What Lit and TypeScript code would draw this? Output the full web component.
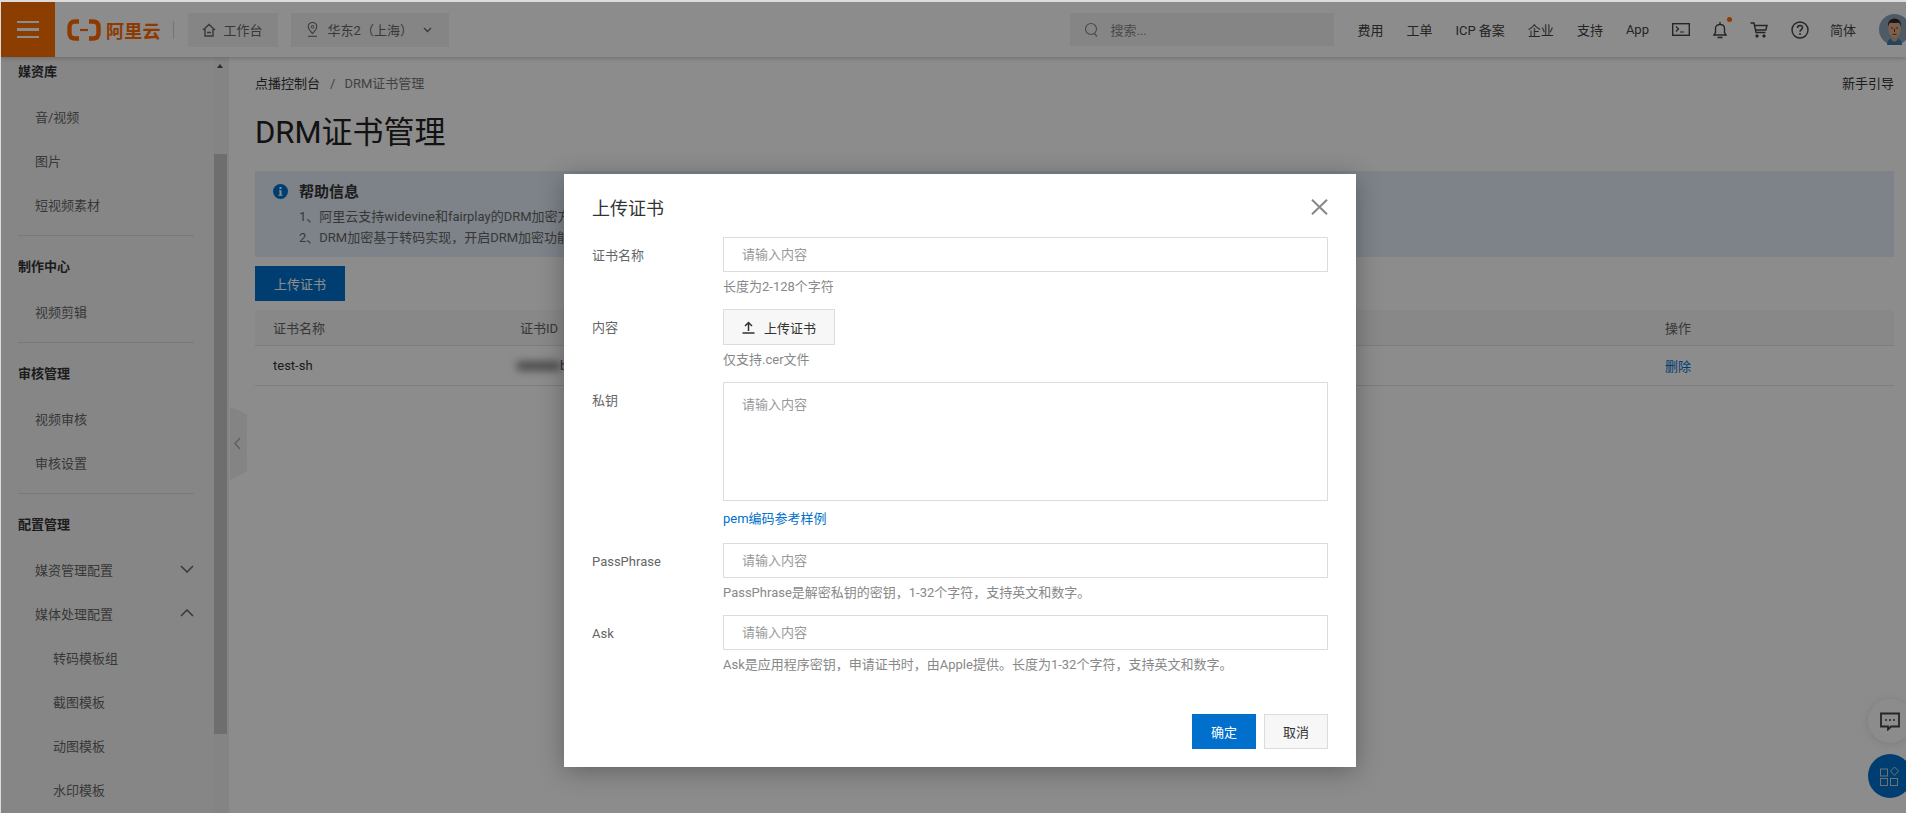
import { LitElement, html, css, svg } from 'lit';
import { customElement } from 'lit/decorators.js';

const menu = [
  { title: '媒资库', items: [{ name: '音/视频' }, { name: '图片' }, { name: '短视频素材' }] },
  { title: '制作中心', items: [{ name: '视频剪辑' }] },
  { title: '审核管理', items: [{ name: '视频审核' }, { name: '审核设置' }] },
  {
    title: '配置管理',
    items: [
      { name: '媒资管理配置', arrow: 'down' },
      { name: '媒体处理配置', arrow: 'up' },
      { name: '转码模板组', sub: true },
      { name: '截图模板', sub: true },
      { name: '动图模板', sub: true },
      { name: '水印模板', sub: true },
    ],
  },
];

const icon = (w: number, h: number, box: string, body: unknown) =>
  html`<svg width=${w} height=${h} viewBox=${box} fill="none" stroke="currentColor">${body}</svg>`;

const chevron = (up: boolean) => icon(14, 8, '0 0 14 8', svg`<path d=${up ? 'M1 7l6-6 6 6' : 'M1 1l6 6 6-6'} stroke-width="1.5"/>`);

@customElement('app-root')
export class AppRoot extends LitElement {
  static styles = css`
    :host {
      display: block;
      font-family: Roboto, "Noto Sans CJK SC", sans-serif;
      font-size: 13px;
      color: #333;
    }
    .page {
      position: relative;
      width: 1906px;
      height: 813px;
      box-sizing: border-box;
      overflow: hidden;
      background: #fff;
      border-top: 2px solid #dcdcdc;
      border-left: 1px solid #dcdcdc;
    }

    /* top bar */
    .top {
      position: relative;
      z-index: 1;
      display: flex;
      align-items: center;
      height: 55px;
      background: #fff;
      box-shadow: 0 1px 5px rgba(0, 0, 0, 0.22);
    }
    .burger {
      display: flex;
      flex-direction: column;
      justify-content: center;
      gap: 5px;
      box-sizing: border-box;
      width: 54px;
      height: 55px;
      padding: 0 16px;
      background: #ff7200;
    }
    .burger i { display: block; height: 2.4px; background: #fff; }
    .logo { display: flex; align-items: center; margin-left: 12px; color: #ff6a00; }
    .logo b { margin-left: 5px; font-size: 18px; font-weight: 700; letter-spacing: 0.2px; white-space: nowrap; }
    .sep { width: 1px; height: 18px; margin: 0 14px 0 12px; background: #d5d5d5; }
    .tab {
      display: flex;
      align-items: center;
      box-sizing: border-box;
      height: 34px;
      background: #f3f3f3;
      color: #666;
      white-space: nowrap;
    }
    .tab.work { width: 90px; padding-left: 14px; gap: 8px; margin-right: 13px; }
    .tab.region { width: 158px; padding-left: 16px; gap: 10px; }
    .search {
      display: flex;
      align-items: center;
      gap: 11px;
      box-sizing: border-box;
      width: 264px;
      height: 33px;
      margin-left: auto;
      padding-left: 14px;
      background: #f3f3f3;
      color: #888;
    }
    .nav { display: flex; align-items: center; gap: 23px; margin-left: 23px; color: #444; white-space: nowrap; }
    .lang { margin-left: -2px; }
    .bell { position: relative; display: flex; }
    .bell::after {
      content: "";
      position: absolute;
      right: -5px;
      top: -4px;
      width: 5px;
      height: 5px;
      border-radius: 50%;
      background: #ff6a00;
    }
    .avatar { display: flex; margin: 0 -4px 0 23px; }

    .body { display: flex; height: 756px; }

    /* sidebar */
    .side {
      display: flex;
      flex: none;
      width: 228px;
      height: 756px;
      overflow: hidden;
      background: #f5f5f5;
    }
    .list { flex: 1; margin-top: -7px; padding: 0 20px 0 17px; color: #666; }
    .head { height: 44px; line-height: 44px; font-weight: 700; color: #333; }
    .item {
      display: flex;
      align-items: center;
      justify-content: space-between;
      height: 44px;
      padding-left: 17px;
    }
    .item.sub { padding-left: 35px; }
    .list hr { margin: 9px 0 9px; border: 0; border-top: 1px solid #dcdcdc; }
    .bar { flex: none; width: 15px; background: #f1f1f1; }
    .bar .up {
      width: 0;
      margin: 7px 0 0 3px;
      border: 3.5px solid transparent;
      border-top: 0;
      border-bottom: 4px solid #505050;
    }
    .bar .thumb { width: 13px; height: 580px; margin-top: 86px; background: #c8c8c8; }

    .handle {
      position: absolute;
      z-index: 1;
      left: 229px;
      top: 405px;
      width: 17px;
      height: 73px;
      display: flex;
      align-items: center;
      padding-left: 4px;
      box-sizing: border-box;
      background: #f0f0f0;
      color: #aaa;
      clip-path: polygon(0 0, 100% 10%, 100% 88%, 0 100%);
    }

    /* main */
    .main { flex: 1; min-width: 0; padding: 17px 12px 0 26px; }
    .crumb { display: flex; justify-content: space-between; line-height: 20px; color: #333; }
    .crumb span span { color: #777; }
    .crumb em { margin: 0 9px 0 10px; font-style: normal; color: #777; }
    h1 { margin: 19px 0 18px; font-size: 31px; font-weight: 400; line-height: 40px; color: #222; }
    .alert {
      display: flex;
      gap: 11px;
      box-sizing: border-box;
      height: 86px;
      padding: 11px 18px;
      background: #e3effa;
      line-height: 21px;
      color: #666;
      white-space: nowrap;
      overflow: hidden;
    }
    .alert svg { flex: none; margin-top: 2px; }
    .alert strong { display: block; margin-bottom: 3px; font-size: 15px; color: #333; }
    .primary {
      display: block;
      width: 90px;
      height: 35px;
      margin: 9px 0;
      padding: 0;
      border: 0;
      background: #0070cc;
      color: #fff;
      font: inherit;
    }
    .grid { display: grid; grid-template-columns: 247px 1fr 247px; align-items: center; border-bottom: 1px solid #e3e3e3; }
    .grid > div { padding-left: 18px; }
    .grid.th { height: 36px; background: #f7f7f7; color: #666; box-sizing: border-box; }
    .grid.tr { height: 40px; box-sizing: border-box; color: #333; }
    .secret { display: flex; align-items: center; margin-left: -3px; }
    .secret i { width: 43px; height: 8px; background: #777; filter: blur(4px); }
    .secret span { color: #60307a; }
    .del { color: #0070cc; }

    .chat, .apps {
      position: absolute;
      left: 1867px;
      display: flex;
      align-items: center;
      justify-content: center;
      box-sizing: border-box;
      width: 44px;
      height: 44px;
      border-radius: 50%;
    }
    .chat { top: 697px; background: #fff; color: #444; box-shadow: 0 1px 8px rgba(0, 0, 0, 0.12); }
    .apps { top: 752px; background: #0070cc; color: #ccc; }

    /* dialog */
    .mask { position: absolute; z-index: 2; inset: 0; background: rgba(0, 0, 0, 0.45); }
    .dialog {
      position: absolute;
      left: 563px;
      top: 172px;
      box-sizing: border-box;
      width: 792px;
      height: 593px;
      padding: 20px 28px 0;
      background: #fff;
      box-shadow: 0 4px 24px rgba(0, 0, 0, 0.3);
    }
    .dlg-head { display: flex; justify-content: space-between; align-items: center; height: 26px; margin-bottom: 17px; }
    .dlg-head span { font-size: 18px; color: #333; }
    .dlg-head svg { color: #888; }
    .row { display: grid; grid-template-columns: 131px 1fr; margin-bottom: 12px; }
    .row.area-row { margin-bottom: 0; }
    .row label { line-height: 37px; color: #666; }
    .field {
      box-sizing: border-box;
      height: 35px;
      padding: 0 18px;
      border: 1px solid #dcdcdc;
      line-height: 34px;
      color: #999;
    }
    .field.area { height: 119px; padding-top: 5px; }
    .hint { margin-top: 5px; line-height: 20px; color: #888; white-space: nowrap; }
    .hint.link { margin-top: 8px; margin-bottom: 14px; color: #0070cc; }
    .upload {
      display: flex;
      align-items: center;
      gap: 9px;
      box-sizing: border-box;
      width: 112px;
      height: 36px;
      padding-left: 18px;
      border: 1px solid #dcdcdc;
      background: #f7f7f7;
      color: #333;
    }
    .foot { display: flex; justify-content: flex-end; gap: 8px; margin-top: 39px; }
    .foot button {
      box-sizing: border-box;
      width: 64px;
      height: 35px;
      padding: 0;
      border: 1px solid #dcdcdc;
      background: #f7f7f7;
      color: #333;
      font: inherit;
    }
    .foot button.ok { border-color: #0070cc; background: #0070cc; color: #fff; }
  `;

  renderTop() {
    return html`<div class="top">
      <div class="burger"><i></i><i></i><i></i></div>
      <div class="logo">
        ${icon(34, 22, '0 0 34 22', svg`
          <path d="M12 2.500H8C4.500 2.500 2.500 4.500 2.500 8v6c0 3.500 2 5.500 5.500 5.500h4M22 2.500h4c3.500 0 5.500 2 5.500 5.500v6c0 3.500-2 5.500-5.500 5.500h-4" stroke-width="4.400"/>
          <path d="M13 11h8" stroke-width="2.200"/>`)}
        <b>阿里云</b>
      </div>
      <div class="sep"></div>
      <div class="tab work">
        ${icon(14, 14, '0 0 14 14', svg`<path d="M1 7l6-5.500L13 7M3 6v7h8V6M5 9.500h4" stroke-width="1.400"/>`)}
        <span>工作台</span>
      </div>
      <div class="tab region">
        ${icon(11, 15, '0 0 11 15', svg`
          <path d="M5.500 11.500C3 8.800 1.200 7 1.200 4.800a4.300 4.300 0 0 1 8.600 0c0 2.200-1.800 4-4.300 6.700zM1 14.300h9" stroke-width="1.100"/>
          <circle cx="5.500" cy="4.800" r="1.300" stroke-width="1"/>`)}
        <span>华东2（上海）</span>
        ${icon(9, 6, '0 0 9 6', svg`<path d="M1 1l3.500 3.500L8 1" stroke-width="1.300"/>`)}
      </div>
      <div class="search">
        ${icon(15, 16, '0 0 15 16', svg`<circle cx="7" cy="7" r="5.500" stroke-width="1.200"/><path d="M10.500 11.500l2.500 3" stroke-width="1.200"/>`)}
        <span>搜索...</span>
      </div>
      <div class="nav">
        <span>费用</span><span>工单</span><span>ICP 备案</span><span>企业</span><span>支持</span><span>App</span>
        ${icon(18, 13, '0 0 18 13', svg`<rect x=".7" y=".7" width="16.600" height="11.600" stroke-width="1.400"/><path d="M4 3.500l2.500 2.500L4 8.500M8 9h4" stroke-width="1.200"/>`)}
        <span class="bell">
          ${icon(14, 18, '0 0 14 18', svg`<path d="M1 14h12l-1.500-2.500V7.500C11.500 5 9.500 3.500 7 3.500S2.500 5 2.500 7.500v4L1 14zM7 1v2.500M4.500 16.500h5" stroke-width="1.400"/>`)}
        </span>
        ${icon(18, 16, '0 0 18 16', svg`<path d="M.5 1H4l2 9.500h9.500M4.500 3.500H17l-1.200 4.500H5.500" stroke-width="1.400"/><circle cx="7" cy="14" r="1.200" fill="currentColor"/><circle cx="14" cy="14" r="1.200" fill="currentColor"/>`)}
        ${icon(18, 18, '0 0 18 18', svg`<circle cx="9" cy="9" r="8" stroke-width="1.400"/><path d="M6.500 7c0-1.500 1-2.400 2.500-2.400s2.500.9 2.500 2.200c0 1.900-2.500 1.900-2.500 3.900" stroke-width="1.500"/><circle cx="9" cy="13" r="1" fill="currentColor" stroke="none"/>`)}
        <span class="lang">简体</span>
      </div>
      <div class="avatar">
        ${html`<svg width="31" height="31" viewBox="0 0 31 31">
          <circle cx="15.500" cy="15.500" r="15.500" fill="#8ea5b8"/>
          <path d="M8 31c0-5 3-7 7.500-7s7.500 2 7.500 7z" fill="#3f7fae"/>
          <path d="M12.500 21h6v5l-3 2-3-2z" fill="#d8a583"/>
          <ellipse cx="15.500" cy="15" rx="6.300" ry="8.500" fill="#e2b08f"/>
          <path d="M9 13c-.5-5 2-8.500 6.500-8.500S22.500 8 22 13c-.5-2-1-4-2.500-4.500-2 .8-6 .8-8 0C10 9 9.500 11 9 13z" fill="#33271f"/>
          <path d="M12 14h2.300M16.700 14h2.300M15.500 15v3M13.500 20.300h4" stroke="#5a3a2a" fill="none"/>
        </svg>`}
      </div>
    </div>`;
  }

  renderSide() {
    return html`<div class="side">
      <div class="list">
        ${menu.map(
          (group, i) => html`
            ${i ? html`<hr />` : ''}
            <div class="head">${group.title}</div>
            ${group.items.map(
              (it: any) => html`<div class="item ${it.sub ? 'sub' : ''}">
                <span>${it.name}</span>
                ${it.arrow ? chevron(it.arrow === 'up') : ''}
              </div>`
            )}
          `
        )}
      </div>
      <div class="bar"><div class="up"></div><div class="thumb"></div></div>
    </div>`;
  }

  renderMain() {
    return html`<div class="main">
      <div class="crumb">
        <span>点播控制台<em>/</em><span>DRM证书管理</span></span>
        <span>新手引导</span>
      </div>
      <h1>DRM证书管理</h1>
      <div class="alert">
        ${html`<svg width="15" height="15" viewBox="0 0 15 15">
          <circle cx="7.500" cy="7.500" r="7.500" fill="#0070cc"/>
          <path d="M6 6.300h2.500v4.500H9.500v1h-4v-1h1V7.300H6zM6.500 3h2v2h-2z" fill="#fff"/>
        </svg>`}
        <div>
          <strong>帮助信息</strong>
          <div>1、阿里云支持widevine和fairplay的DRM加密方式</div>
          <div>2、DRM加密基于转码实现，开启DRM加密功能</div>
        </div>
      </div>
      <button class="primary">上传证书</button>
      <div class="grid th"><div>证书名称</div><div>证书ID</div><div>操作</div></div>
      <div class="grid tr">
        <div>test-sh</div>
        <div class="secret"><i></i><span>b</span></div>
        <div class="del">删除</div>
      </div>
    </div>`;
  }

  renderDialog() {
    return html`<div class="mask">
      <div class="dialog">
        <div class="dlg-head">
          <span>上传证书</span>
          ${icon(17, 16, '0 0 17 16', svg`<path d="M1 .7l15 14.600M16 .7L1 15.300" stroke-width="2"/>`)}
        </div>
        <div class="row">
          <label>证书名称</label>
          <div><div class="field">请输入内容</div><div class="hint">长度为2-128个字符</div></div>
        </div>
        <div class="row">
          <label>内容</label>
          <div>
            <div class="upload">
              ${icon(13, 13, '0 0 13 13', svg`<path d="M6.500 10V1.500M3 5l3.500-3.500L10 5M.5 12h12" stroke-width="1.500"/>`)}
              <span>上传证书</span>
            </div>
            <div class="hint">仅支持.cer文件</div>
          </div>
        </div>
        <div class="row area-row">
          <label>私钥</label>
          <div><div class="field area">请输入内容</div><div class="hint link">pem编码参考样例</div></div>
        </div>
        <div class="row">
          <label>PassPhrase</label>
          <div><div class="field">请输入内容</div><div class="hint">PassPhrase是解密私钥的密钥，1-32个字符，支持英文和数字。</div></div>
        </div>
        <div class="row">
          <label>Ask</label>
          <div><div class="field">请输入内容</div><div class="hint">Ask是应用程序密钥，申请证书时，由Apple提供。长度为1-32个字符，支持英文和数字。</div></div>
        </div>
        <div class="foot"><button class="ok">确定</button><button>取消</button></div>
      </div>
    </div>`;
  }

  render() {
    return html`<div class="page">
      ${this.renderTop()}
      <div class="body">${this.renderSide()}${this.renderMain()}</div>
      <div class="handle">${icon(7, 13, '0 0 7 13', svg`<path d="M6 1L1 6.500 6 12" stroke-width="1.300"/>`)}</div>
      <div class="chat">
        ${icon(20, 19, '0 0 20 19', svg`<path d="M1 1.500h18v13h-8l-3 3v-3H1z" stroke-width="1.800"/><circle cx="6" cy="8" r="1" fill="currentColor" stroke="none"/><circle cx="10" cy="8" r="1" fill="currentColor" stroke="none"/><circle cx="14" cy="8" r="1" fill="currentColor" stroke="none"/>`)}
      </div>
      <div class="apps">
        ${icon(20, 20, '0 0 20 20', svg`<rect x=".5" y="3" width="7" height="7" stroke-width="1"/><rect x=".5" y="12.500" width="7" height="7" stroke-width="1"/><rect x="10.500" y="12.500" width="7" height="7" stroke-width="1"/><path d="M14.500 1l4 4-4 4.500-4-4.500z" stroke-width="1"/>`)}
      </div>
      ${this.renderDialog()}
    </div>`;
  }
}
